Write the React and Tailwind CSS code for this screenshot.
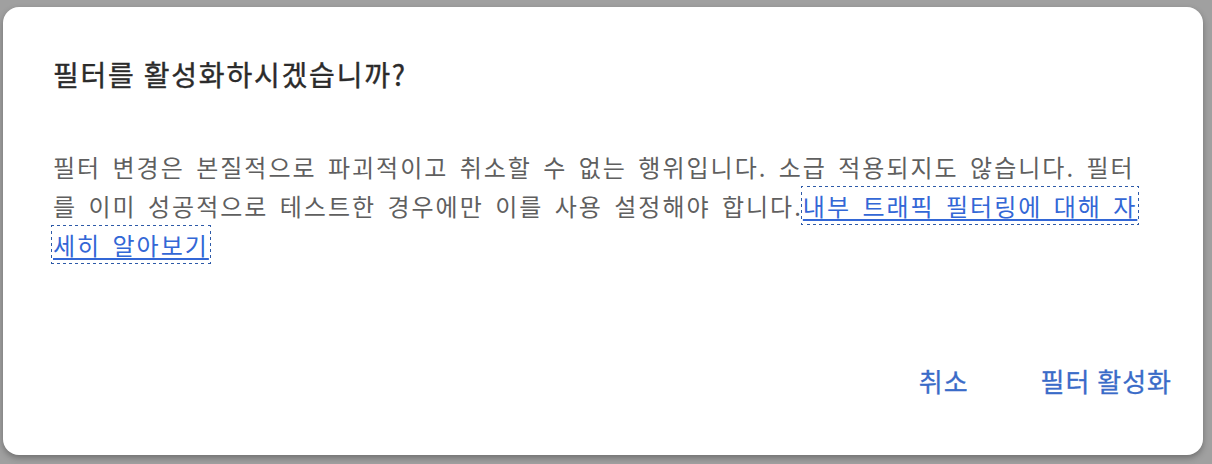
import React from 'react';

const font = { fontFamily: '"Noto Sans CJK KR", "Noto Sans", sans-serif' };

const ActivateFilterDialog = () => {
  return (
    <div className="w-[1212px] h-[464px] bg-[#a0a0a0] pt-[7px] pl-[3px] pr-[9px]" style={font}>
      <div className="h-[448px] bg-white rounded-[16px] shadow-[0_3px_6px_rgba(0,0,0,0.3)] flex flex-col">
        <div className="px-[50px]">
          {/* Title */}
          <h2 className="mt-[50px] text-[28px] leading-[34px] text-[#2b2b2b] font-normal tracking-[1.8px] [-webkit-text-stroke:0.4px_#2b2b2b]">
            필터를 활성화하시겠습니까?
          </h2>

          {/* Body */}
          <p className="mt-[56px] text-[24px] leading-[39px] text-[#5f5f5f] [word-spacing:4px] tracking-[2px]">
            필터 변경은 본질적으로 파괴적이고 취소할 수 없는 행위입니다. 소급 적용되지도 않습니다. 필터를 이미 성공적으로 테스트한 경우에만 이를 사용 설정해야 합니다.
            <a
              href="#"
              className="text-[#3367d6] underline underline-offset-[3px] outline-1 outline-dotted outline-[#2d5aa8] outline-offset-[1px]"
            >
              내부 트래픽 필터링에 대해 자세히 알아보기
            </a>
          </p>
        </div>

        {/* Actions */}
        <div className="mt-auto mb-[59px] flex justify-end gap-[72px] pr-[31px]">
          <button className="text-[26px] leading-[30px] text-[#3a6bc8] font-normal tracking-[1px] [-webkit-text-stroke:0.3px_#3a6bc8]">취소</button>
          <button className="text-[26px] leading-[30px] text-[#3a6bc8] font-normal tracking-[1px] [-webkit-text-stroke:0.3px_#3a6bc8]">필터 활성화</button>
        </div>
      </div>
    </div>
  );
};

export default function App() {
  return <ActivateFilterDialog />;
}
